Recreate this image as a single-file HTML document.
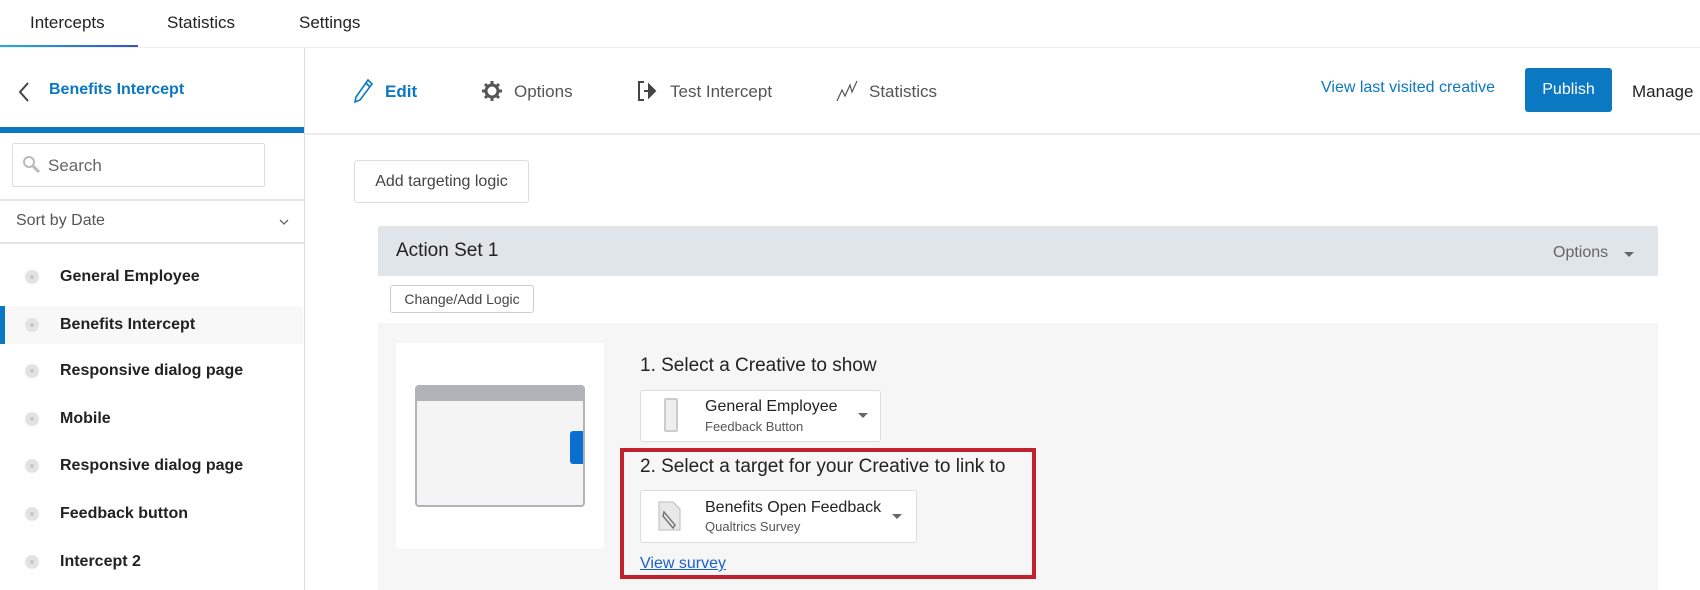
<!DOCTYPE html>
<html><head><meta charset="utf-8"><style>
*{box-sizing:border-box;margin:0;padding:0}
body{width:1700px;height:590px;overflow:hidden;background:#fff;font-family:"Liberation Sans",sans-serif;color:#222;position:relative}
.a{position:absolute;white-space:nowrap}
.item{position:absolute;left:0;width:303px;height:38px;display:flex;align-items:center}
.item .dot{position:absolute;left:25px;width:14px;height:14px;border-radius:50%;background:#e3e3e3}
.item .dot:after{content:"";position:absolute;left:5px;top:5px;width:4px;height:4px;border-radius:50%;background:#c8c8c8}
.item span{position:absolute;left:60px;font-weight:bold;font-size:16px;color:#222}
.dd{position:absolute;background:#fff;border:1px solid #ddd;border-radius:3px}
.caret{position:absolute;width:0;height:0;border-left:5px solid transparent;border-right:5px solid transparent;border-top:5px solid #666}
</style></head><body>
<div class="a" style="left:30px;top:13px;font-size:17px">Intercepts</div>
<div class="a" style="left:167px;top:13px;font-size:17px">Statistics</div>
<div class="a" style="left:299px;top:13px;font-size:17px">Settings</div>
<div class="a" style="left:0;top:45px;width:138px;height:3px;background:linear-gradient(90deg,#21b0d8,#3a4fc4)"></div>
<div class="a" style="left:0;top:47px;width:1700px;height:1px;background:#eee"></div>
<div class="a" style="left:304px;top:48px;width:1px;height:542px;background:#ddd"></div>
<svg class="a" style="left:17px;top:81px" width="14" height="22" viewBox="0 0 14 22"><path d="M11 2 L3 11 L11 20" fill="none" stroke="#444" stroke-width="2"/></svg>
<div class="a" style="left:49px;top:81px;font-size:16px;font-weight:bold;color:#0b78c2">Benefits Intercept</div>
<div class="a" style="left:0;top:127px;width:304px;height:6px;background:#0b78c2"></div>
<div class="a" style="left:12px;top:143px;width:253px;height:44px;border:1px solid #ddd;border-radius:2px"></div>
<svg class="a" style="left:22px;top:155px" width="20" height="20" viewBox="0 0 20 20"><circle cx="7" cy="7" r="5" fill="none" stroke="#bbb" stroke-width="2"/><path d="M11 11 L17 17" stroke="#bbb" stroke-width="3"/></svg>
<div class="a" style="left:48px;top:156px;font-size:17px;color:#666">Search</div>
<div class="a" style="left:0;top:199px;width:304px;height:2px;background:#e5e5e5"></div>
<div class="a" style="left:16px;top:212px;font-size:16px;color:#555">Sort by Date</div>
<svg class="a" style="left:279px;top:219px" width="10" height="7" viewBox="0 0 10 7"><path d="M1 1 L5 5 L9 1" fill="none" stroke="#666" stroke-width="1.3"/></svg>
<div class="a" style="left:0;top:242px;width:304px;height:2px;background:#e5e5e5"></div>
<div class="item" style="top:258px"><i class="dot"></i><span>General Employee</span></div>
<div class="item" style="top:306px;background:#f8f8f8"><i style="position:absolute;left:0;top:0;width:5px;height:38px;background:#0b78c2"></i><i class="dot"></i><span>Benefits Intercept</span></div>
<div class="item" style="top:352px"><i class="dot"></i><span>Responsive dialog page</span></div>
<div class="item" style="top:400px"><i class="dot"></i><span>Mobile</span></div>
<div class="item" style="top:447px"><i class="dot"></i><span>Responsive dialog page</span></div>
<div class="item" style="top:495px"><i class="dot"></i><span>Feedback button</span></div>
<div class="item" style="top:543px"><i class="dot"></i><span>Intercept 2</span></div>
<svg class="a" style="left:352px;top:78px" width="22" height="26" viewBox="0 0 22 26"><path d="M16 2 L20 6 L8 22 L3 24 L4 19 Z M14 5 L18 9" fill="none" stroke="#0b78c2" stroke-width="1.6"/></svg>
<div class="a" style="left:385px;top:82px;font-size:17px;font-weight:bold;color:#0b78c2">Edit</div>
<svg class="a" style="left:481px;top:80px" width="22" height="22" viewBox="0 0 22 22"><circle cx="11" cy="11" r="6" fill="none" stroke="#555" stroke-width="3"/><path d="M11 1v5M11 16v5M1 11h5M16 11h5M4 4l3.5 3.5M14.5 14.5L18 18M4 18l3.5-3.5M14.5 7.5L18 4" stroke="#555" stroke-width="3"/></svg>
<div class="a" style="left:514px;top:82px;font-size:17px;color:#555">Options</div>
<svg class="a" style="left:637px;top:80px" width="22" height="22" viewBox="0 0 22 22"><path d="M7 2 H2 V20 H7" fill="none" stroke="#444" stroke-width="2"/><path d="M7 11 H13 M12 5 L18 11 L12 17 Z" stroke="#444" stroke-width="2" fill="#444"/></svg>
<div class="a" style="left:670px;top:82px;font-size:17px;color:#555">Test Intercept</div>
<svg class="a" style="left:836px;top:80px" width="24" height="22" viewBox="0 0 24 22"><path d="M1 21 L6 10 L9 16 L14 5 L16 12 L21 1" fill="none" stroke="#555" stroke-width="1.2"/></svg>
<div class="a" style="left:869px;top:82px;font-size:17px;color:#555">Statistics</div>
<div class="a" style="left:1321px;top:79px;font-size:16px;color:#0b78c2">View last visited creative</div>
<div class="a" style="left:1525px;top:68px;width:87px;height:44px;background:#0b78c2;border-radius:3px;color:#fff;font-size:16px;text-align:center;line-height:44px">Publish</div>
<div class="a" style="left:1632px;top:82px;font-size:17px;color:#222">Manage</div>
<div class="a" style="left:305px;top:133px;width:1395px;height:2px;background:#ececec"></div>
<div class="a" style="left:354px;top:160px;width:175px;height:43px;border:1px solid #ddd;border-radius:3px;font-size:16px;color:#444;text-align:center;line-height:41px">Add targeting logic</div>
<div class="a" style="left:378px;top:226px;width:1280px;height:50px;background:#e0e5e9;border-radius:2px"></div>
<div class="a" style="left:396px;top:240px;font-size:19px;color:#222">Action Set 1</div>
<div class="a" style="left:1553px;top:244px;font-size:16px;color:#666">Options</div>
<div class="caret" style="left:1624px;top:252px"></div>
<div class="a" style="left:390px;top:285px;width:144px;height:28px;border:1px solid #ccc;border-radius:3px;font-size:14px;color:#444;text-align:center;line-height:26px">Change/Add Logic</div>
<div class="a" style="left:378px;top:323px;width:1280px;height:267px;background:#f6f6f6"></div>
<div class="a" style="left:396px;top:343px;width:208px;height:206px;background:#fff;border-radius:3px"></div>
<div class="a" style="left:415px;top:385px;width:170px;height:122px;background:#f4f4f4;border:2px solid #b0b3b8;border-radius:4px;overflow:hidden"><div style="height:14px;background:#b0b3b8"></div></div>
<div class="a" style="left:570px;top:431px;width:13px;height:33px;background:#0b6fd2;border-radius:3px 0 0 3px"></div>
<div class="a" style="left:640px;top:355px;font-size:19px;color:#222">1. Select a Creative to show</div>
<div class="dd" style="left:640px;top:390px;width:241px;height:52px"></div>
<div class="a" style="left:664px;top:398px;width:14px;height:34px;border:2px solid #ccc;background:#eee;border-radius:2px"></div>
<div class="a" style="left:705px;top:398px;font-size:16px;color:#222">General Employee</div>
<div class="a" style="left:705px;top:419px;font-size:13px;color:#555">Feedback Button</div>
<div class="caret" style="left:858px;top:413px"></div>
<div class="a" style="left:620px;top:448px;width:416px;height:131px;border:4px solid #c3202f"></div>
<div class="a" style="left:640px;top:456px;font-size:19px;color:#222">2. Select a target for your Creative to link to</div>
<div class="dd" style="left:640px;top:490px;width:277px;height:53px"></div>
<svg class="a" style="left:655px;top:498px" width="30" height="36" viewBox="0 0 30 36"><path d="M4 4 H18 L25 11 V32 H4 Z" fill="#e8e8e8" stroke="#bbb"/><path d="M9 14 L20 27 L18 30 L8 18 Z" fill="none" stroke="#777" stroke-width="1.5"/></svg>
<div class="a" style="left:705px;top:499px;font-size:16px;color:#222">Benefits Open Feedback</div>
<div class="a" style="left:705px;top:519px;font-size:13px;color:#555">Qualtrics Survey</div>
<div class="caret" style="left:892px;top:514px"></div>
<div class="a" style="left:640px;top:555px;font-size:16px;color:#1a5fd0;text-decoration:underline">View survey</div>
</body></html>
